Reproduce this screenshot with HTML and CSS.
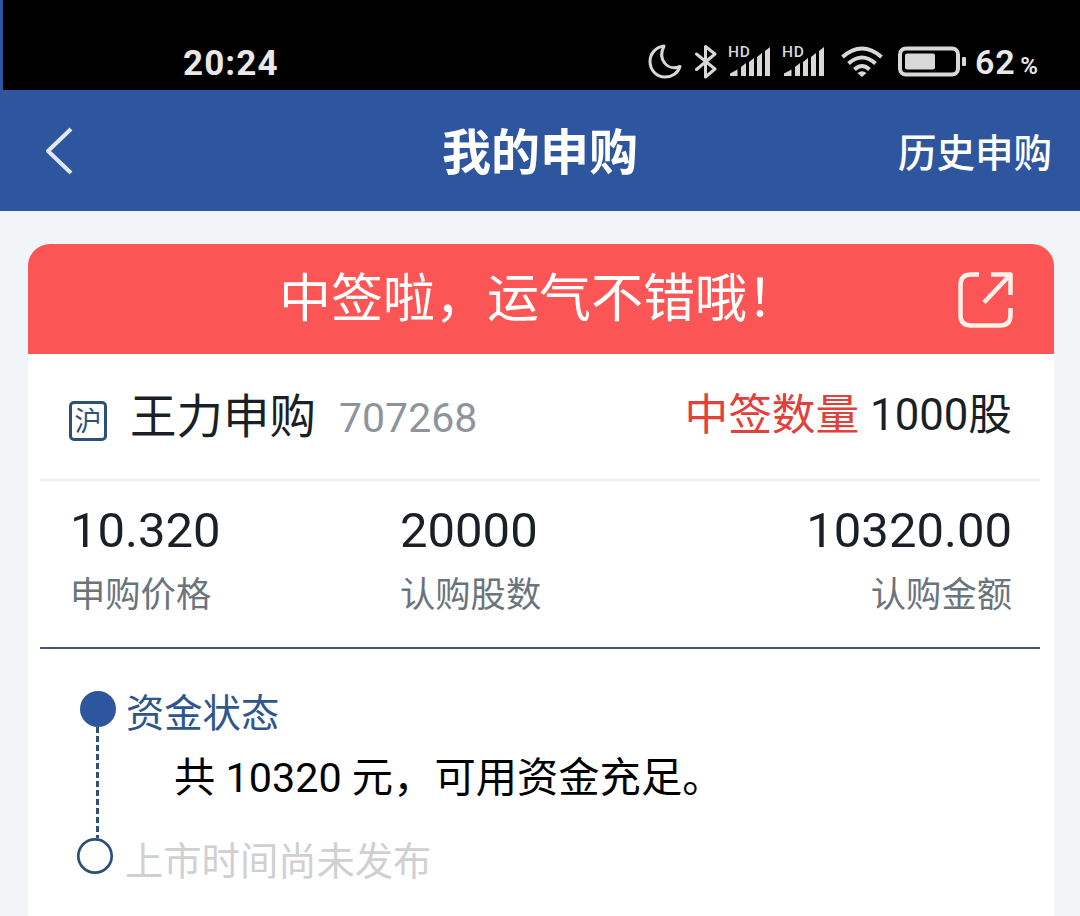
FILE: index.html
```html
<!DOCTYPE html>
<html lang="zh-CN">
<head>
    <meta charset="UTF-8">
    <meta name="viewport" content="width=device-width, initial-scale=1.0">
    <title>我的申购</title>
    <link rel="stylesheet" href="styles.css">
</head>
<body>
    <div class="status-bar">
        <span class="clock">20:24</span>
        <div class="status-icons">
            <svg class="icon-moon" width="34" height="36" viewBox="0 0 34 36">
                <path d="M16 2C8 3 2 9.500 2 17.500C2 26 8.500 33 17 33C24 33 30 29 32 22.500C20 27.500 9 16 16 2Z"/>
            </svg>
            <svg class="icon-bluetooth" width="22" height="36" viewBox="0 0 22 36">
                <path d="M1.500 10L20 25L10.500 33V2.500L20 10L1.500 25.500"/>
            </svg>
            <div class="signal">
                <span class="hd">HD</span>
                <svg width="42" height="30" viewBox="0 0 42 30">
                    <path d="M1 29V26.500L8.500 22.500V29ZM12 29V20L17 16V29ZM20 29V15L25 11V29ZM28 29V10L33 6V29ZM36 29V4L41 0V29Z"/>
                </svg>
            </div>
            <div class="signal">
                <span class="hd">HD</span>
                <svg width="42" height="30" viewBox="0 0 42 30">
                    <path d="M1 29V26.500L8.500 22.500V29ZM12 29V20L17 16V29ZM20 29V15L25 11V29ZM28 29V10L33 6V29ZM36 29V4L41 0V29Z"/>
                </svg>
            </div>
            <svg class="icon-wifi" width="42" height="32" viewBox="0 0 42 32">
                <path d="M1.500 11Q21 -6 40.500 11M7.500 17.500Q21 5.500 34.500 17.500M13.500 23.500Q21 16.500 28.500 23.500"/>
                <path class="dot" d="M16.500 27Q21 23.500 25.500 27L21 31Z"/>
            </svg>
            <svg class="icon-battery" width="70" height="32" viewBox="0 0 70 32">
                <rect class="shell" x="2" y="2.500" width="58" height="26" rx="6"/>
                <rect class="fill" x="7" y="7.500" width="30" height="16" rx="2"/>
                <rect class="fill" x="64" y="11" width="4" height="9" rx="1"/>
            </svg>
            <span class="percent">62<small>%</small></span>
        </div>
    </div>

    <header class="nav">
        <svg class="back" width="28" height="48" viewBox="0 0 28 48">
            <path d="M26 2L3 24L26 46"/>
        </svg>
        <h1 class="title">我的申购</h1>
        <a class="history">历史申购</a>
    </header>

    <main class="card">
        <div class="banner">
            <span class="banner-text">中签啦，运气不错哦！</span>
            <svg class="share" width="56" height="56" viewBox="0 0 56 56">
                <path d="M21 2.500H13Q2.500 2.500 2.500 13V43Q2.500 53.500 13 53.500H42Q52.500 53.500 52.500 43V36M33 2.500H52.500V23M51.500 3.500L26 30.500"/>
            </svg>
        </div>

        <div class="stock">
            <span class="market">沪</span>
            <span class="name">王力申购</span>
            <span class="code">707268</span>
            <span class="lots"><em>中签数量</em> 1000股</span>
        </div>

        <div class="stats">
            <div class="stat">
                <strong>10.320</strong>
                <span>申购价格</span>
            </div>
            <div class="stat">
                <strong>20000</strong>
                <span>认购股数</span>
            </div>
            <div class="stat right">
                <strong>10320.00</strong>
                <span>认购金额</span>
            </div>
        </div>

        <div class="timeline">
            <svg class="rail" width="42" height="186" viewBox="0 0 42 186">
                <path d="M21.500 37V148"/>
                <circle class="done" cx="22" cy="19" r="18"/>
                <circle class="todo" cx="19" cy="166" r="16.700"/>
            </svg>
            <div class="steps">
                <div class="step">资金状态</div>
                <p class="detail">共 10320 元，可用资金充足。</p>
                <div class="step pending">上市时间尚未发布</div>
            </div>
        </div>
    </main>
</body>
</html>
```

FILE: styles.css
```css
* {
    box-sizing: border-box;
}

body {
    margin: 0;
    height: 916px;
    overflow: hidden;
    display: flex;
    flex-direction: column;
    background: #f1f5f8;
    color: #1b1f26;
    font-family: Roboto, "Noto Sans CJK SC", sans-serif;
}

svg {
    display: block;
    flex: none;
    fill: none;
}

/* status bar */
.status-bar {
    height: 90px;
    flex: none;
    display: flex;
    justify-content: space-between;
    padding: 43px 42px 0 180px;
    border-left: 3px solid #2e569e;
    background: #000;
    color: #e8e8e8;
}

.clock {
    margin-top: 1px;
    font: bold 35px/40px Roboto, sans-serif;
    letter-spacing: 1.1px;
}

.status-icons {
    display: flex;
    align-items: flex-start;
    height: 40px;
}

.icon-moon,
.icon-bluetooth {
    stroke: #d8d8d8;
    stroke-width: 3;
    stroke-linejoin: round;
    stroke-linecap: round;
}

.icon-moon {
    margin-top: 1px;
}

.icon-bluetooth {
    margin: 1px 0 0 13px;
}

.signal {
    position: relative;
    margin-left: 12px;
    padding-top: 4px;
}

.signal svg {
    fill: #d8d8d8;
}

.hd {
    position: absolute;
    left: -1px;
    top: 1px;
    color: #d8d8d8;
    font: 500 15.5px/16px Roboto, sans-serif;
    letter-spacing: 0.8px;
}

.icon-wifi {
    margin: 3px 0 0 16px;
    stroke: #d8d8d8;
    stroke-width: 4;
}

.icon-wifi .dot {
    fill: #d8d8d8;
    stroke: none;
}

.icon-battery {
    margin: 3px 0 0 15px;
}

.shell {
    stroke: #d8d8d8;
    stroke-width: 4;
}

.fill {
    fill: #d8d8d8;
}

.percent {
    margin: -1px 0 0 7px;
    font: 600 34px/40px Roboto, sans-serif;
    letter-spacing: 0.7px;
    white-space: nowrap;
}

.percent small {
    margin-left: 5px;
    font-size: 24px;
    letter-spacing: 0;
}

/* page header */
.nav {
    height: 121px;
    flex: none;
    display: grid;
    grid-template-columns: 1fr auto 1fr;
    align-items: center;
    padding: 5px 28px 0 28px;
    background: #2e569e;
    color: #fff;
}

.back {
    margin: 0 0 5px 17px;
    stroke: #dfe9fb;
    stroke-width: 4;
    stroke-linejoin: round;
}

.title {
    margin: 0;
    padding-top: 2px;
    font-size: 49px;
    font-weight: 700;
    line-height: 60px;
}

.history {
    justify-self: end;
    padding-top: 1px;
    font-size: 38.5px;
    font-weight: 500;
    line-height: 50px;
}

/* card */
.card {
    flex: 1;
    margin: 33px 26px 0 28px;
    border-radius: 22px 22px 0 0;
    overflow: hidden;
    background: #fff;
}

.banner {
    height: 110px;
    display: flex;
    align-items: center;
    justify-content: space-between;
    padding: 2px 40px 0 251px;
    background: #fb5655;
    color: #fff;
}

.banner-text {
    font-size: 52px;
    line-height: 60px;
}

.share {
    stroke: #fff1ea;
    stroke-width: 4.5;
    stroke-linejoin: round;
}

.stock {
    height: 127px;
    display: flex;
    align-items: center;
    margin: 0 14px 0 12px;
    padding: 0 28px 0 29px;
    border-bottom: 2px solid #eceef0;
}

.market {
    width: 38px;
    height: 40px;
    margin-top: 8px;
    border: 3px solid #2d5078;
    border-radius: 5px;
    color: #2d5078;
    font-size: 27px;
    line-height: 36px;
    text-align: center;
}

.name {
    margin: 0 0 8px 23px;
    font-size: 46.5px;
}

.code {
    margin: 2px 0 0 23px;
    color: #8e949c;
    font-size: 41px;
}

.lots {
    margin: 0 0 12px auto;
    font-size: 43.7px;
}

.lots em {
    color: #e1403b;
    font-style: normal;
}

.stats {
    height: 168px;
    display: grid;
    grid-template-columns: 330px 1fr 1fr;
    margin: 0 14px 0 12px;
    padding: 19px 28px 0 30px;
    border-bottom: 2px solid #44597a;
}

.stat strong,
.stat span {
    display: block;
}

.stat strong {
    font-size: 49px;
    font-weight: 400;
    line-height: 62px;
}

.stat span {
    color: #6b747b;
    font-size: 35.3px;
    line-height: 67px;
}

.right {
    text-align: right;
}

/* timeline */
.timeline {
    display: flex;
    padding: 41px 0 0 48px;
}

.rail path {
    stroke: #2d5078;
    stroke-width: 3;
    stroke-dasharray: 6 3;
}

.done {
    fill: #2e569e;
}

.todo {
    fill: #fff;
    stroke: #2d5078;
    stroke-width: 2.700;
}

.steps {
    margin-left: 8px;
    padding-top: 2px;
}

.step {
    color: #2f568c;
    font-size: 38.3px;
    line-height: 44px;
}

.detail {
    margin: 20px 0 40px 48px;
    color: #000;
    font-size: 41.3px;
    line-height: 44px;
}

.pending {
    margin-left: -1px;
    color: #d0d0d0;
}
```
